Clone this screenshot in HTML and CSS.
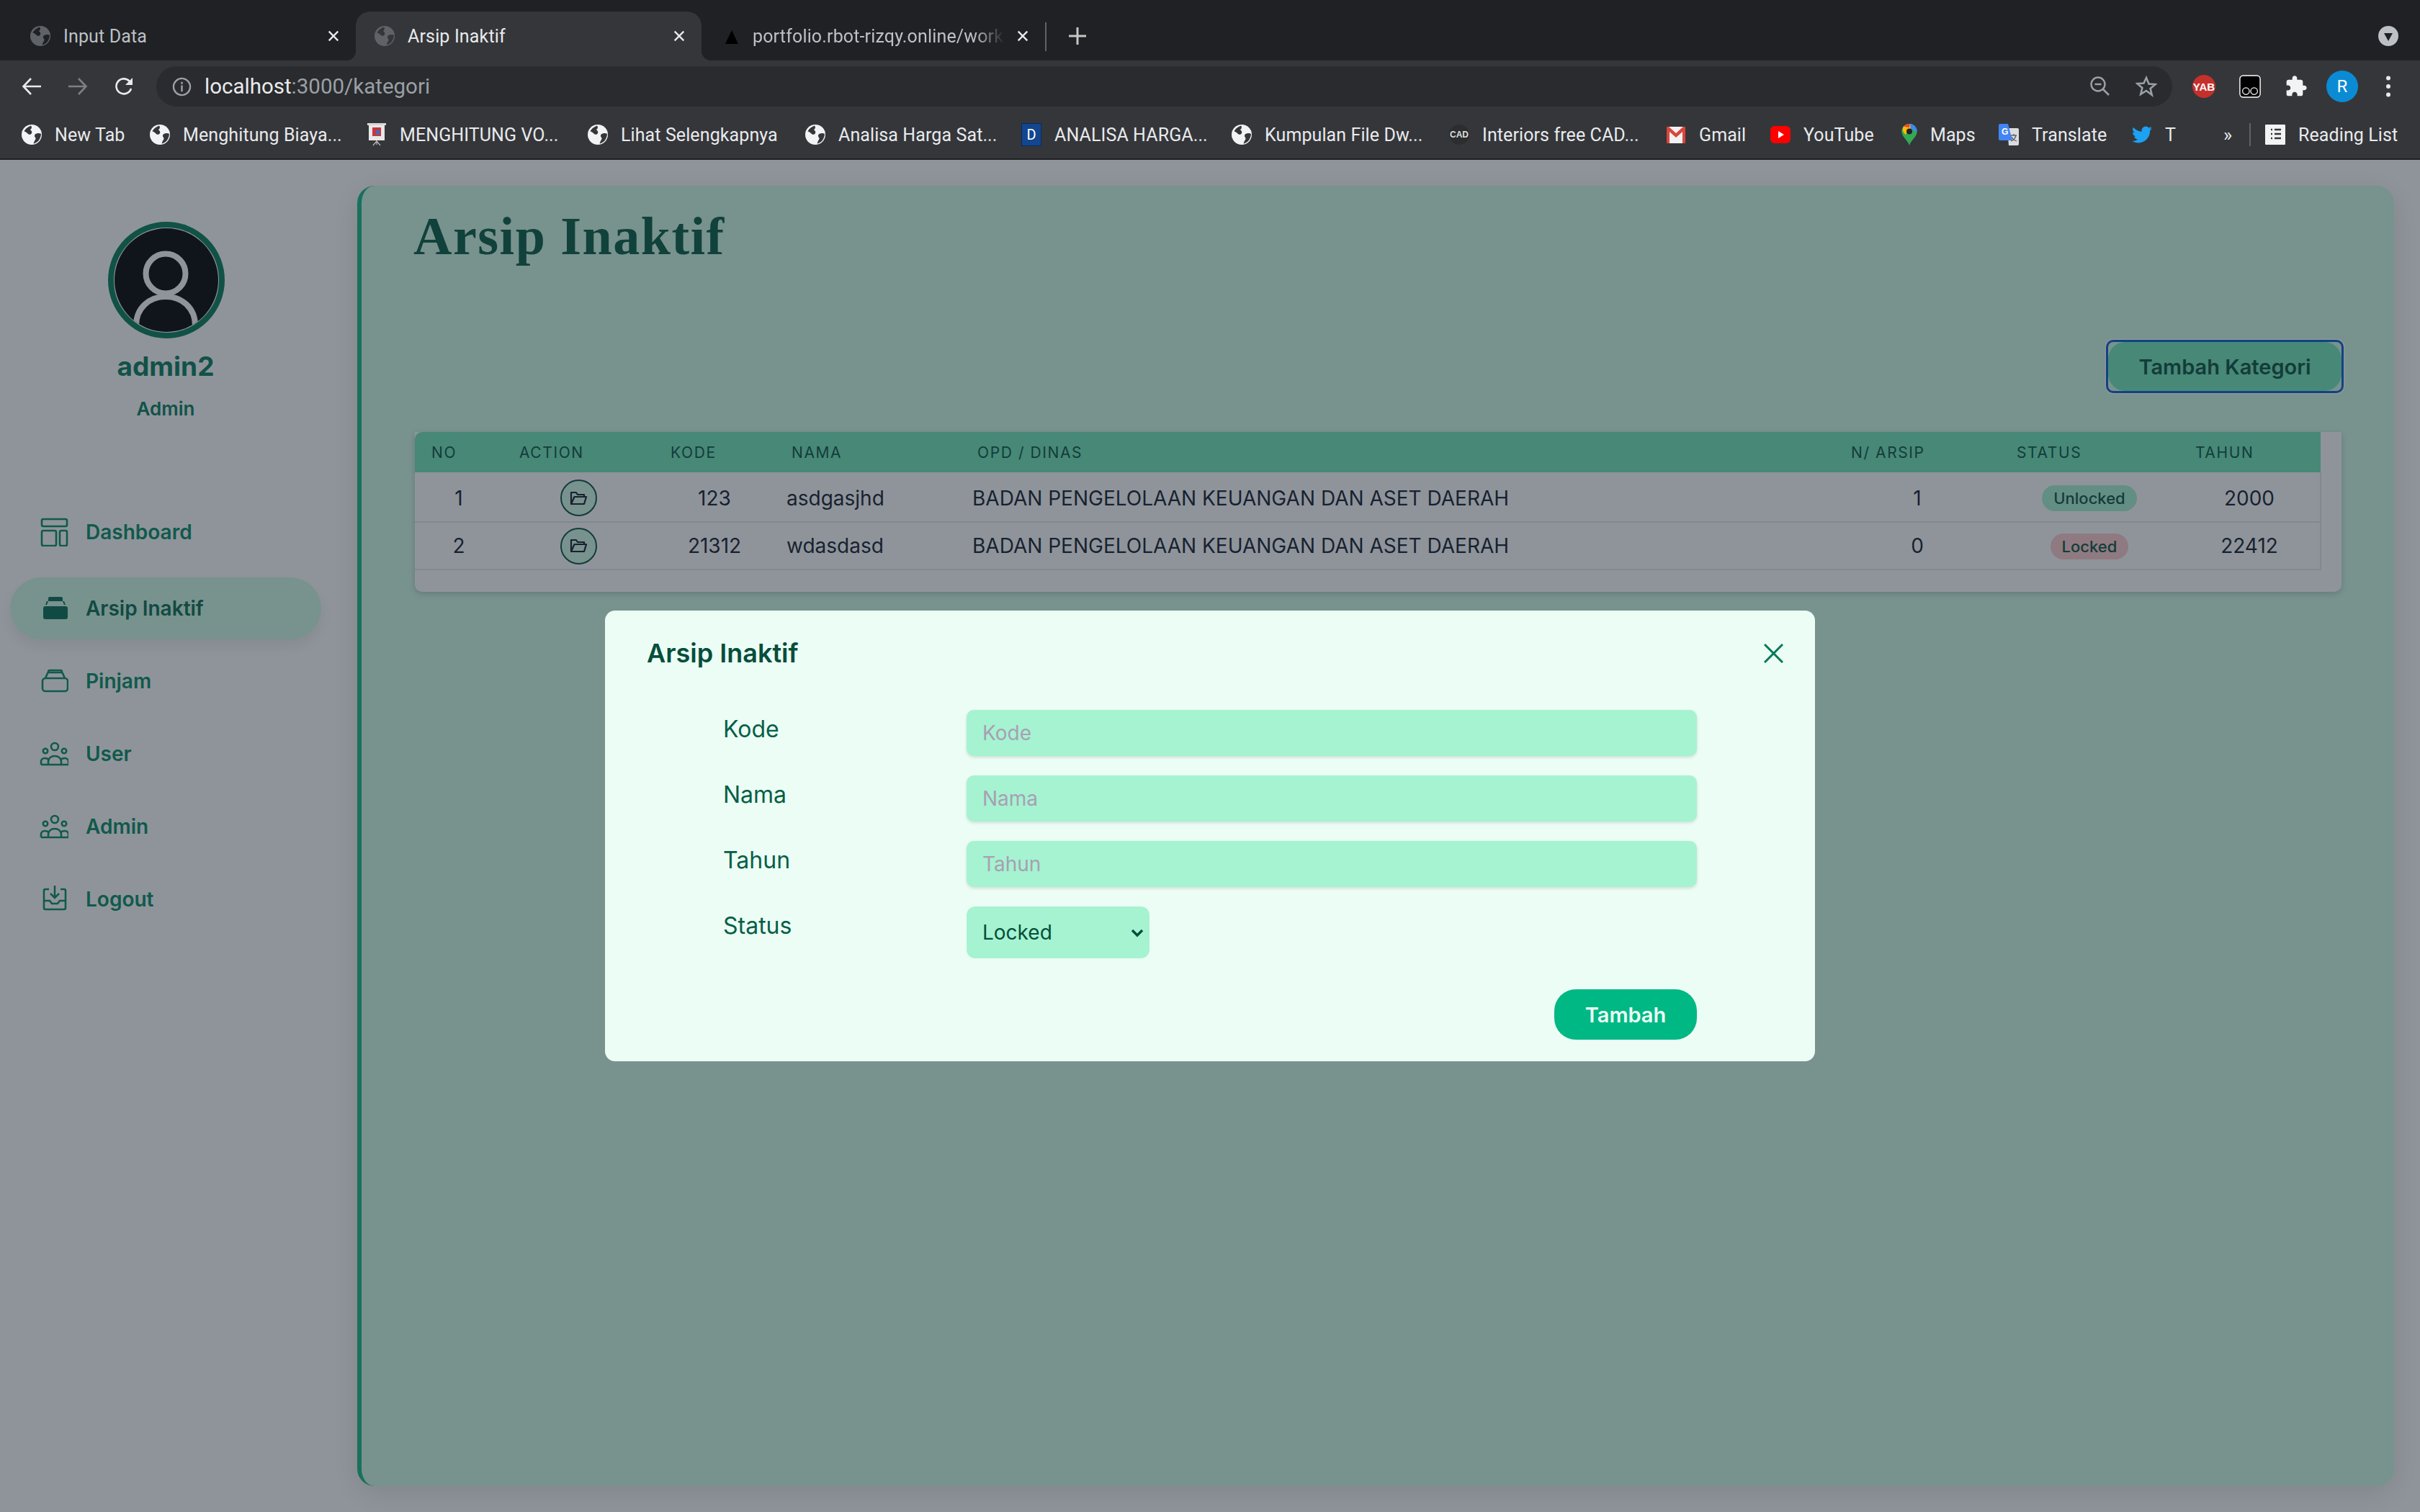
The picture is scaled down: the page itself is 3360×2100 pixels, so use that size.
FILE: index.html
```html
<!DOCTYPE html>
<html lang="id">
<head>
  <meta charset="UTF-8">
  <meta name="viewport" content="width=device-width, initial-scale=1.0">
  <title>Arsip Inaktif</title>
  <link rel="stylesheet" href="styles.css">
</head>
<body>
  <svg class="defs" width="0" height="0">
    <symbol id="globe" viewBox="0 0 28 28">
      <circle cx="14" cy="14" r="14" fill="currentColor"/>
      <path d="M13 1.5C9 3 5 6 3.5 9.5 6 10 7.5 11.500 9 13c1.500 1.500 4 1 5-1s-.5-3.500-2-5c1.500-1 3-2.500 1-5.500z" fill="var(--hole)"/>
      <path d="M27 13c-2-1.500-5-1.500-7.500 0-2 1.300-2 3.500-.5 5 1 1 .5 3-1 4.500l-1.500 4c5-1 10-5.500 10.500-13.500z" fill="var(--hole)"/>
    </symbol>
    <symbol id="x" viewBox="0 0 20 20">
      <path d="M3 3l14 14M17 3L3 17" fill="none" stroke="currentColor" stroke-width="2.600"/>
    </symbol>
    <symbol id="folder" viewBox="0 0 24 20">
      <path d="M2 18V2h7l2 3h9v3M2 18h18l3-10H6.500z" fill="none" stroke="currentColor" stroke-width="2.200" stroke-linejoin="round"/>
    </symbol>
    <symbol id="people" viewBox="0 0 40 40">
      <g fill="none" stroke="currentColor" stroke-width="2.600">
        <circle cx="21" cy="10" r="5"/>
        <circle cx="8" cy="16" r="3.200"/>
        <circle cx="34" cy="16" r="3.200"/>
        <path d="M2 35h38M12 35v-4c0-5 4-8 9-8s9 3 9 8v4M2 35v-4c0-3 2-5 5-5 2 0 4 .5 6 2M40 35v-4c0-3-2-5-5-5-2 0-4 .5-6 2"/>
      </g>
    </symbol>
  </svg>

  <div class="tabstrip">
    <div class="tab">
      <svg class="fav fav-dim"><use href="#globe"/></svg>
      <span class="tab-title">Input Data</span>
      <svg class="tab-x"><use href="#x"/></svg>
    </div>
    <div class="tab tab-active">
      <svg class="fav fav-dim"><use href="#globe"/></svg>
      <span class="tab-title">Arsip Inaktif</span>
      <svg class="tab-x"><use href="#x"/></svg>
    </div>
    <div class="tab tab-third">
      <svg class="fav" viewBox="0 0 28 28"><path d="M14 6l9 19H5z" fill="#000"/></svg>
      <span class="tab-title tab-fade">portfolio.rbot-rizqy.online/work</span>
      <svg class="tab-x"><use href="#x"/></svg>
    </div>
    <span class="tab-sep"></span>
    <svg class="tab-plus" viewBox="0 0 24 24"><path d="M12 0v24M0 12h24" stroke="#c4c7c5" stroke-width="3"/></svg>
    <svg class="tab-menu" viewBox="0 0 28 28"><circle cx="14" cy="14" r="14" fill="#bdc1c6"/><path d="M8 10h12l-6 11z" fill="#202124"/></svg>
  </div>

  <div class="toolbar">
    <div class="nav-btns">
      <svg viewBox="0 0 28 28"><path d="M27 14H3M13 3L2.500 14 13 25" fill="none" stroke="#e8eaed" stroke-width="2.600"/></svg>
      <svg viewBox="0 0 28 28"><path d="M1 14h24M15 3l10.500 11L15 25" fill="none" stroke="#7d7f82" stroke-width="2.600"/></svg>
      <svg viewBox="0 0 28 28"><path d="M24 17a10.500 10.500 0 1 1-2.500-10.500L25 10" fill="none" stroke="#e8eaed" stroke-width="2.600"/><path d="M26 2v10H16z" fill="#e8eaed"/></svg>
    </div>
    <div class="omnibox">
      <svg class="info" viewBox="0 0 28 28"><circle cx="14" cy="14" r="12" fill="none" stroke="#9aa0a6" stroke-width="2.400"/><path d="M14 12v9M14 7v3" stroke="#9aa0a6" stroke-width="2.600"/></svg>
      <span class="url">localhost<span class="url-dim">:3000/kategori</span></span>
      <div class="omni-icons">
        <svg viewBox="0 0 30 30"><circle cx="13" cy="12" r="9.500" fill="none" stroke="#9aa0a6" stroke-width="2.400"/><path d="M8.500 12h9M20 19l8 8" stroke="#9aa0a6" stroke-width="2.600"/></svg>
        <svg viewBox="0 0 30 30"><path d="M15 3l3.500 8.500 9 .7-6.900 5.800 2.200 8.900L15 21l-7.800 4.900 2.200-8.900-6.900-5.800 9-.7z" fill="none" stroke="#9aa0a6" stroke-width="2.600"/></svg>
      </div>
    </div>
    <div class="ext-icons">
      <span class="ext-cell"><span class="ext-yab">YAB</span></span>
      <span class="ext-cell">
        <svg class="ext-glasses" viewBox="0 0 32 34"><rect x="1" y="1" width="30" height="32" rx="5" fill="#000" stroke="#fff" stroke-width="1.500"/><circle cx="10" cy="24" r="5" fill="none" stroke="#fff" stroke-width="1.300"/><circle cx="22" cy="24" r="5" fill="none" stroke="#fff" stroke-width="1.300"/></svg>
      </span>
      <span class="ext-cell">
        <svg class="ext-puzzle" viewBox="0 0 24 24"><path d="M20.500 11H19V7c0-1.100-.9-2-2-2h-4V3.500C13 2.120 11.880 1 10.500 1S8 2.120 8 3.500V5H4c-1.100 0-1.990.9-1.990 2v3.800H3.500c1.490 0 2.700 1.210 2.700 2.700s-1.210 2.700-2.700 2.700H2V20c0 1.100.9 2 2 2h3.800v-1.500c0-1.490 1.210-2.700 2.700-2.700 1.490 0 2.700 1.210 2.700 2.700V22H17c1.100 0 2-.9 2-2v-4h1.500c1.380 0 2.500-1.120 2.500-2.500S21.880 11 20.500 11z" fill="#f1f3f4"/></svg>
      </span>
      <span class="ext-cell"><span class="profile">R</span></span>
      <span class="ext-cell">
        <svg class="ext-dots" viewBox="0 0 8 34"><circle cx="4" cy="4" r="3.400" fill="#e8eaed"/><circle cx="4" cy="17" r="3.400" fill="#e8eaed"/><circle cx="4" cy="30" r="3.400" fill="#e8eaed"/></svg>
      </span>
    </div>
  </div>

  <div class="bookmarks">
    <a class="bm"><svg class="fav fav-white"><use href="#globe"/></svg>New Tab</a>
    <a class="bm"><svg class="fav fav-white"><use href="#globe"/></svg>Menghitung Biaya...</a>
    <a class="bm"><svg class="fav fav-tall" viewBox="0 0 28 32"><rect x="1" y="0" width="26" height="3" fill="#d8d8d8"/><rect x="3" y="3" width="22" height="21" fill="#e8e8e8"/><rect x="8" y="6" width="12" height="12" fill="#c9353f"/><rect x="13" y="10" width="5" height="6" fill="#3a6fb5"/><path d="M14 24v6M14 25l-5 6M14 25l5 6" stroke="#bbb" stroke-width="1.200"/></svg>MENGHITUNG VO...</a>
    <a class="bm"><svg class="fav fav-white"><use href="#globe"/></svg>Lihat Selengkapnya</a>
    <a class="bm"><svg class="fav fav-white"><use href="#globe"/></svg>Analisa Harga Sat...</a>
    <a class="bm"><span class="fav-d">D</span>ANALISA HARGA...</a>
    <a class="bm"><svg class="fav fav-white"><use href="#globe"/></svg>Kumpulan File Dw...</a>
    <a class="bm"><span class="fav-cad">CAD</span>Interiors free CAD...</a>
    <a class="bm"><svg class="fav" viewBox="0 0 28 28"><rect x="1" y="3" width="26" height="23" fill="#f1f1f1"/><path d="M1 3h3l10 9 10-9h3v23h-4V10l-9 8-9-8v16H1z" fill="#d9453c"/></svg>Gmail</a>
    <a class="bm"><svg class="fav" viewBox="0 0 28 28"><rect y="2" width="28" height="24" rx="6" fill="#f00"/><path d="M11 9l8 5-8 5z" fill="#fff"/></svg>YouTube</a>
    <a class="bm bm-maps"><svg class="fav fav-tall" viewBox="0 0 28 36"><path d="M14 35C12 27 2 22 2 13a12 12 0 0 1 24 0c0 9-10 14-12 22z" fill="#34a853"/><path d="M5 5a12 12 0 0 1 15-2L8 18C4 14 2 10 5 5z" fill="#fbbc04"/><path d="M5 5a12 12 0 0 1 9-4v6z" fill="#ea4335"/><path d="M14 1a12 12 0 0 1 12 12l-9-3z" fill="#4285f4"/><circle cx="14" cy="13" r="4.500" fill="#222"/></svg>Maps</a>
    <a class="bm"><svg class="fav fav-tall" viewBox="0 0 28 30"><path d="M12 6h14a2 2 0 0 1 2 2v20a2 2 0 0 1-2 2H14z" fill="#dadce0"/><path d="M2 0h11l6 23H2a2 2 0 0 1-2-2V2a2 2 0 0 1 2-2z" fill="#4285f4"/><path d="M17 16h8M21 14v2M24 16c-1 4-4 7-7 8M18 18c1 3 4 5 7 6" stroke="#5f6368" stroke-width="1.300" fill="none"/><text x="4" y="15" class="fav-g">G</text></svg>Translate</a>
    <a class="bm"><svg class="fav" viewBox="0 0 24 24"><path d="M23.950 4.570a10 10 0 0 1-2.820.78 4.960 4.960 0 0 0 2.160-2.720c-.95.55-2 .96-3.120 1.180a4.920 4.920 0 0 0-8.380 4.480C7.690 8.090 4.070 6.130 1.640 3.160a4.820 4.820 0 0 0-.67 2.480c0 1.710.87 3.200 2.190 4.100a4.900 4.900 0 0 1-2.230-.61v.06a4.920 4.920 0 0 0 3.950 4.830 5 5 0 0 1-2.210.08 4.940 4.940 0 0 0 4.600 3.420A9.870 9.870 0 0 1 0 19.540a14 14 0 0 0 7.560 2.210c9.050 0 14-7.500 14-13.980 0-.21 0-.42-.02-.63a9.940 9.940 0 0 0 2.460-2.550z" fill="#1da1f2"/></svg>T</a>
    <span class="bm-more">»</span>
    <span class="bm-sep"></span>
    <a class="bm"><svg class="fav" viewBox="0 0 28 28"><rect width="28" height="28" rx="1" fill="#f1f3f4"/><path d="M8 7h2M13 7h9M8 13h2M13 13h9M8 19h2M13 19h9" stroke="#35363a" stroke-width="2.400"/></svg>Reading List</a>
  </div>

  <div class="app">
    <aside class="sidebar">
      <div class="profile-box">
        <svg class="avatar" viewBox="0 0 162 162">
          <clipPath id="avatarClip"><circle cx="81" cy="81" r="72"/></clipPath>
          <circle cx="81" cy="81" r="77" fill="#fff" stroke="#037a57" stroke-width="8"/>
          <circle cx="81" cy="81" r="72" fill="#000"/>
          <g clip-path="url(#avatarClip)" fill="none" stroke="#fff" stroke-width="8">
            <circle cx="80" cy="72" r="27.500"/>
            <path d="M39 160v-16c0-24 18-40 41-40s41 16 41 40v16"/>
          </g>
        </svg>
        <div class="username">admin2</div>
        <div class="role">Admin</div>
      </div>
      <nav class="menu">
        <a class="menu-item">
          <svg class="menu-icon" viewBox="0 0 40 40"><g fill="none" stroke="currentColor" stroke-width="2.600"><rect x="3" y="2" width="35" height="10" rx="2"/><rect x="3" y="18" width="20" height="21" rx="2"/><rect x="28" y="18" width="10" height="21" rx="2"/></g></svg>
          Dashboard
        </a>
        <a class="menu-item menu-active">
          <svg class="menu-icon" viewBox="0 0 40 40"><rect x="5" y="17" width="34" height="18" rx="3" fill="currentColor"/><path d="M12 6a2 2 0 0 1 2-2h16a2 2 0 0 1 2 2v4H12z" fill="currentColor"/><path d="M9 15l2-5M35 15l-2-5" stroke="currentColor" stroke-width="2"/></svg>
          Arsip Inaktif
        </a>
        <a class="menu-item">
          <svg class="menu-icon" viewBox="0 0 40 40"><g fill="none" stroke="currentColor" stroke-width="2.600"><rect x="4" y="16" width="35" height="18" rx="4"/><path d="M8 16l3-7a2 2 0 0 1 2-1h17a2 2 0 0 1 2 1l3 7M12 7a2 2 0 0 1 2-2h15a2 2 0 0 1 2 2"/></g></svg>
          Pinjam
        </a>
        <a class="menu-item"><svg class="menu-icon"><use href="#people"/></svg>User</a>
        <a class="menu-item"><svg class="menu-icon"><use href="#people"/></svg>Admin</a>
        <a class="menu-item">
          <svg class="menu-icon" viewBox="0 0 40 40"><g fill="none" stroke="currentColor" stroke-width="2.600"><path d="M13 6H8a2 2 0 0 0-2 2v24a2 2 0 0 0 2 2h26a2 2 0 0 0 2-2V8a2 2 0 0 0-2-2h-5M21 1v16M15 12l6 6 6-6M6 22h8l3 4h8l3-4h8"/></g></svg>
          Logout
        </a>
      </nav>
    </aside>

    <main class="content">
      <h1 class="page-title">Arsip Inaktif</h1>
      <div class="action-row">
        <span class="focus-ring"><button class="btn-add">Tambah Kategori</button></span>
      </div>
      <div class="table-card">
        <table class="data-table">
          <colgroup>
            <col class="c-no"><col class="c-action"><col class="c-kode"><col class="c-nama">
            <col class="c-opd"><col class="c-arsip"><col class="c-status"><col class="c-tahun">
          </colgroup>
          <thead>
            <tr>
              <th>No</th><th>Action</th><th>Kode</th><th>Nama</th>
              <th>OPD / Dinas</th><th>N/ Arsip</th><th>Status</th><th>Tahun</th>
            </tr>
          </thead>
          <tbody>
            <tr>
              <td class="center">1</td>
              <td class="center"><span class="open-btn"><svg><use href="#folder"/></svg></span></td>
              <td class="center">123</td>
              <td>asdgasjhd</td>
              <td>BADAN PENGELOLAAN KEUANGAN DAN ASET DAERAH</td>
              <td class="center">1</td>
              <td class="center"><span class="pill pill-open">Unlocked</span></td>
              <td class="center">2000</td>
            </tr>
            <tr>
              <td class="center">2</td>
              <td class="center"><span class="open-btn"><svg><use href="#folder"/></svg></span></td>
              <td class="center">21312</td>
              <td>wdasdasd</td>
              <td>BADAN PENGELOLAAN KEUANGAN DAN ASET DAERAH</td>
              <td class="center">0</td>
              <td class="center"><span class="pill pill-locked">Locked</span></td>
              <td class="center">22412</td>
            </tr>
          </tbody>
        </table>
      </div>
    </main>

    <div class="overlay">
      <div class="modal">
        <div class="modal-head">
          <h3 class="modal-title">Arsip Inaktif</h3>
          <svg class="modal-close" viewBox="0 0 27 27"><path d="M1 1l25 25M26 1L1 26" stroke="#047857" stroke-width="3"/></svg>
        </div>
        <form class="modal-form">
          <label class="field-label">Kode</label>
          <input class="field" placeholder="Kode">
          <label class="field-label">Nama</label>
          <input class="field" placeholder="Nama">
          <label class="field-label">Tahun</label>
          <input class="field" placeholder="Tahun">
          <label class="field-label">Status</label>
          <div class="select-wrap">
            <select class="field-select"><option>Locked</option><option>Unlocked</option></select>
            <svg class="select-arrow" viewBox="0 0 18 12"><path d="M2 2l7 7 7-7" fill="none" stroke="#064e3b" stroke-width="3.400"/></svg>
          </div>
        </form>
        <div class="modal-foot"><button class="btn-submit">Tambah</button></div>
      </div>
    </div>
  </div>
</body>
</html>
```

FILE: styles.css
```css
* { box-sizing: border-box; }
html, body { margin: 0; padding: 0; }
body { width: 3360px; height: 2100px; overflow: hidden; font-family: Inter, "Noto Sans", sans-serif; background: #fff; display: flex; flex-direction: column; }
.defs { position: absolute; }
svg { display: block; flex: none; }

/* browser chrome */
.tabstrip { height: 84px; background: #202124; display: flex; align-items: flex-end; font-family: Roboto, "Liberation Sans", sans-serif; font-size: 25px; letter-spacing: .15px; color: #bdc1c6; position: relative; --hole: #202124; }
.tab { width: 494px; height: 68px; display: flex; align-items: center; padding: 0 22px 0 42px; flex: none; }
.tab-active { width: 480px; padding: 0 22px 0 26px; background: #35363a; color: #e8eaed; border-radius: 20px 20px 0 0; position: relative; --hole: #35363a; }
.tab-active::before, .tab-active::after { content: ""; position: absolute; bottom: 0; width: 14px; height: 14px; }
.tab-active::before { left: -14px; background: radial-gradient(circle at 0 0, transparent 14px, #35363a 14.500px); }
.tab-active::after { right: -14px; background: radial-gradient(circle at 100% 0, transparent 14px, #35363a 14.500px); }
.tab-third { width: 477px; padding: 0 22px 0 28px; }
.tab-title { flex: 1; margin-left: 18px; white-space: nowrap; overflow: hidden; }
.tab-third .tab-title { margin: 0 16px 0 15px; }
.tab-fade { -webkit-mask-image: linear-gradient(to right, #000 88%, transparent); mask-image: linear-gradient(to right, #000 88%, transparent); }
.tab-x { width: 18px; height: 18px; color: #e8eaed; }
.tab-sep { width: 2px; height: 40px; background: #5f6368; margin: 0 0 13px 0; }
.tab-plus { width: 24px; height: 24px; margin: 0 0 22px 31px; }
.tab-menu { width: 28px; height: 28px; position: absolute; right: 30px; top: 36px; }
.fav { width: 28px; height: 28px; }
.fav-tall { height: 32px; }
.fav-dim { color: #5f6368; }
.fav-white { color: #f1f3f4; }

.toolbar { height: 64px; background: #35363a; display: flex; align-items: flex-start; padding: 8px 0 0 30px; }
.nav-btns { display: flex; gap: 36px; width: 187px; padding-top: 14px; }
.nav-btns svg { width: 28px; height: 28px; }
.omnibox { width: 2799px; height: 56px; border-radius: 28px; background: #2a2b2e; display: flex; align-items: center; padding: 0 4px 0 22px; }
.info { width: 27px; height: 27px; }
.url { margin-left: 18px; font-family: Roboto, "Liberation Sans", sans-serif; font-size: 29.500px; color: #e8eaed; }
.url-dim { color: #9aa0a6; }
.omni-icons { margin-left: auto; display: flex; }
.omni-icons svg { width: 30px; height: 30px; margin: 0 17.500px; }
.ext-icons { display: flex; margin-left: 12px; }
.ext-cell { width: 64px; height: 56px; display: flex; align-items: center; justify-content: center; }
.ext-yab { width: 32px; height: 32px; border-radius: 50%; background: #c5302c; color: #fff; font: 700 15px "Liberation Sans", sans-serif; display: flex; align-items: center; justify-content: center; }
.ext-glasses { width: 32px; height: 32px; }
.ext-puzzle { width: 32px; height: 32px; }
.profile { width: 44px; height: 44px; border-radius: 50%; background: #0b8bd4; color: #fff; font: 400 24px Roboto, sans-serif; display: flex; align-items: center; justify-content: center; }
.ext-dots { width: 8px; height: 30px; }

.bookmarks { height: 74px; background: #35363a; border-bottom: 2px solid #202124; padding-top: 6px; display: grid; grid-template-columns: 178px 301px 307px 302px 300px 292px 302px 301px 145px 179px 138px 185px 127px 36px 22px 1fr; align-items: center; padding-left: 30px; font-family: Roboto, "Liberation Sans", sans-serif; font-size: 25px; letter-spacing: .1px; color: #e8eaed; --hole: #35363a; }
.bm { display: flex; align-items: center; gap: 18px; white-space: nowrap; }
.bm-maps { gap: 15px; }
.bm-more { font-size: 26px; }
.bm-sep { width: 2px; height: 32px; background: #5f6368; }
.fav-d { width: 28px; height: 32px; flex: none; background: #12468e; border: 1px solid #0a2a5c; color: #fff; font-size: 20px; display: flex; align-items: center; justify-content: center; }
.fav-cad { width: 28px; height: 28px; flex: none; border-radius: 50%; background: #2c2d30; font: 700 12px/28px "Liberation Sans", sans-serif; letter-spacing: 0; color: #ddd; text-align: center; }
.fav-g { font: 700 12px "Liberation Sans", sans-serif; fill: #fff; }

/* page */
.app { flex: 1; position: relative; display: flex; background: #fff; }
.sidebar { width: 496px; flex: none; padding: 86px 0 0 14px; color: #008a5e; }
.profile-box { width: 432px; display: flex; flex-direction: column; align-items: center; color: #037a57; }
.avatar { width: 162px; height: 162px; margin-left: 2px; }
.username { font-size: 37px; font-weight: 700; line-height: 44px; margin-top: 17px; }
.role { font-size: 26px; font-weight: 600; line-height: 32px; margin-top: 21px; }
.menu { margin-top: 112px; display: flex; flex-direction: column; gap: 15px; width: 432px; }
.menu-item { height: 86px; display: flex; align-items: center; gap: 24px; padding-left: 41px; font-size: 28px; font-weight: 600; border-radius: 43px; }
.menu-icon { width: 40px; height: 40px; }
.menu-active { margin-top: 5px; background: #d1fae5; color: #036b4d; box-shadow: 0 10px 20px rgba(0,0,0,.08); }

.content { width: 2828px; height: 1806px; margin-top: 36px; background: #d1fae5; border-left: 6px solid #10b981; border-radius: 24px; padding: 0 73px 0 74px; box-shadow: 0 10px 40px rgba(0,0,0,.12); }
.page-title { margin: 28px 0 0 -2px; font-family: "Liberation Serif", serif; font-weight: 700; font-size: 74px; line-height: 84px; letter-spacing: 1.500px; color: #02593f; }
.action-row { display: flex; justify-content: flex-end; margin-top: 102px; margin-right: -3px; }
.focus-ring { display: block; padding: 0; border: 3px solid #005fcc; border-radius: 10px; box-shadow: 0 0 0 1.500px #fff; }
.btn-add { display: block; width: 324px; height: 68px; border: none; border-radius: 24px; background: #6ee7b7; color: #064e3b; font: 600 29px Inter, sans-serif; padding: 0; }
.table-card { margin-top: 54px; height: 222px; background: #fff; border-radius: 0 0 10px 10px; box-shadow: 0 3px 8px rgba(0,0,0,.18); }
.data-table { width: 2646px; table-layout: fixed; border-collapse: collapse; }
.c-no { width: 122px; } .c-action { width: 210px; } .c-kode { width: 168px; } .c-nama { width: 258px; }
.c-opd { width: 1213px; } .c-arsip { width: 230px; } .c-status { width: 248px; } .c-tahun { width: 197px; }
.data-table th { height: 56px; background: #6ee7b7; color: #064e3b; text-align: left; padding: 0 0 0 23px; font-size: 21px; font-weight: 400; text-transform: uppercase; letter-spacing: 1.600px; }
.data-table th:first-child { border-top-left-radius: 10px; }
.data-table td { height: 66px; padding: 0 0 0 16px; font-size: 28px; color: #111827; border-bottom: 2px solid #e5e7eb; white-space: nowrap; }
.data-table tbody tr:first-child td { height: 69px; padding-top: 3px; }
.data-table tbody tr { border-right: 2px solid #e5e7eb; }
.data-table td.center { text-align: center; padding-left: 0; padding-right: 0; }
.open-btn { width: 51px; height: 51px; border: 2px solid #064e3b; border-radius: 50%; background: #d1fae5; display: inline-flex; align-items: center; justify-content: center; color: #111827; vertical-align: middle; }
.open-btn svg { width: 24px; height: 20px; }
.pill { display: inline-block; height: 36px; line-height: 36px; padding: 0 16px; border-radius: 18px; font-size: 22px; font-weight: 500; color: #064e3b; vertical-align: middle; }
.pill-open { background: #a7f3d0; }
.pill-locked { background: #fecaca; }

/* modal */
.overlay { position: absolute; inset: 0; background: rgba(31,41,55,.5); display: flex; justify-content: center; align-items: flex-start; padding-top: 626px; }
.modal { width: 1680px; height: 626px; background: #ecfdf5; border-radius: 14px; }
.modal-head { display: flex; justify-content: space-between; align-items: center; padding: 39px 44px 0 58px; height: 79px; }
.modal-title { margin: 0; font-size: 36px; font-weight: 600; line-height: 40px; color: #064e3b; }
.modal-close { width: 27px; height: 27px; }
.modal-form { display: grid; grid-template-columns: 338px 1014px; row-gap: 27px; padding-left: 164px; margin-top: 59px; }
.field-label { font-size: 32px; line-height: 54px; color: #065f46; }
.field { height: 64px; width: 100%; border: none; border-radius: 10px; background: #a5f3d1; padding: 0 22px; font: 400 28px Inter, sans-serif; color: #064e3b; box-shadow: 0 2px 4px rgba(0,0,0,.12); }
.field::placeholder { color: #a8a0b3; opacity: 1; }
.select-wrap { position: relative; width: 254px; height: 72px; }
.field-select { width: 100%; height: 100%; appearance: none; -webkit-appearance: none; border: none; border-radius: 12px; background: #a5f3d1; padding: 0 22px; font: 400 28px Inter, sans-serif; color: #064e3b; }
.select-arrow { position: absolute; right: 8px; top: 31px; width: 18px; height: 12px; }
.modal-foot { display: flex; justify-content: flex-end; padding-right: 164px; margin-top: 43px; }
.btn-submit { width: 198px; height: 70px; border: none; border-radius: 30px; background: #00b884; color: #ecfdf5; font: 600 29px Inter, sans-serif; }
```
